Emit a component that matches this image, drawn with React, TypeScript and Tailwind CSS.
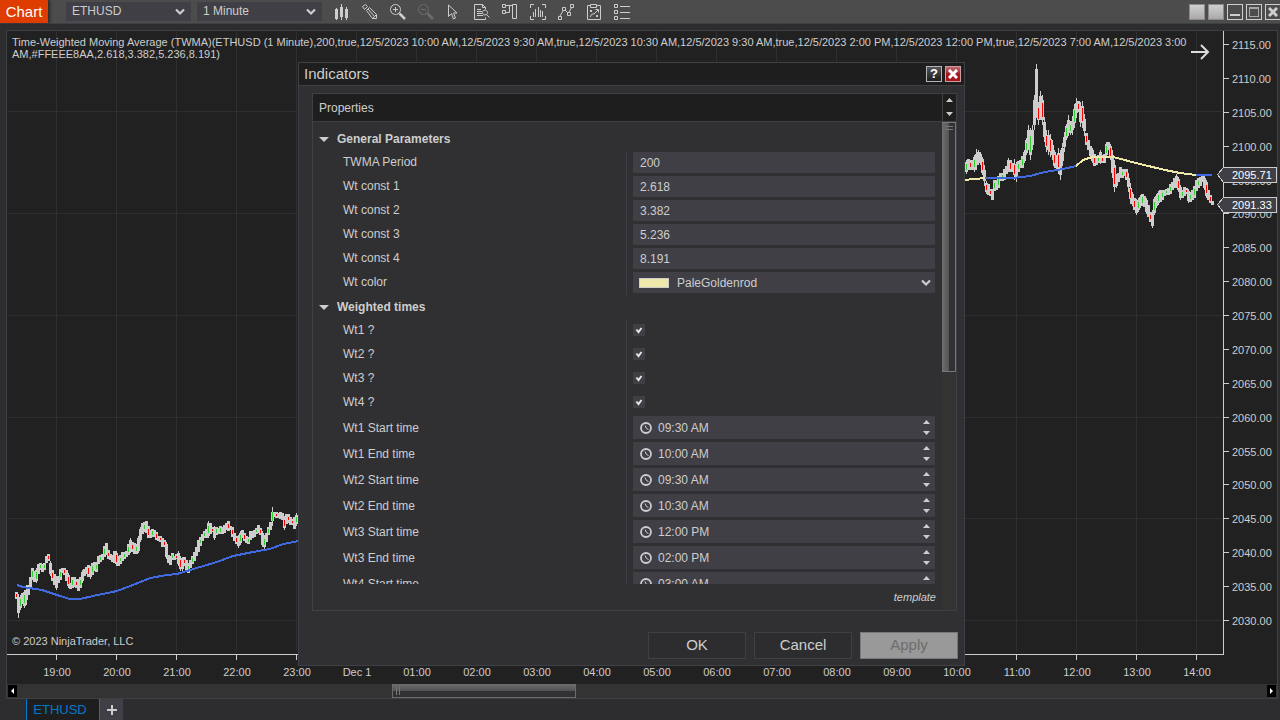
import { useState } from "react";

type Range = [number, number];

// high / low of every bar, in canvas pixels, one bar each 2px
const eveningBars: Range[] = [
  [592, 599], [594, 618], [595, 610], [593, 604], [590, 608], [585, 605], [585, 595], [577, 588],
  [568, 580], [571, 582], [568, 583], [564, 574], [563, 570], [564, 572], [563, 570], [556, 563],
  [554, 561], [561, 576], [570, 581], [574, 585], [576, 590], [576, 583], [569, 580], [568, 573],
  [568, 575], [570, 581], [573, 588], [583, 589], [577, 588], [577, 587], [579, 588], [579, 591],
  [577, 588], [570, 583], [569, 576], [567, 574], [565, 577], [566, 579], [563, 575], [562, 571],
  [562, 572], [556, 564], [555, 562], [554, 560], [546, 557], [543, 555], [550, 559], [554, 560],
  [555, 562], [551, 563], [551, 566], [556, 566], [555, 564], [552, 561], [552, 559], [551, 557],
  [544, 555], [538, 553], [542, 552], [543, 554], [544, 554], [536, 553], [527, 542], [523, 534],
  [522, 532], [521, 533], [526, 538], [530, 538], [529, 537], [530, 537], [532, 540], [536, 541],
  [536, 542], [538, 547], [540, 547], [542, 559], [555, 563], [556, 565], [553, 560], [556, 560],
  [554, 559], [551, 566], [556, 571], [557, 571], [557, 566], [560, 572], [563, 573], [560, 568],
  [556, 564], [552, 561], [547, 556], [540, 552], [537, 546], [534, 541], [531, 538], [529, 538],
  [521, 538], [523, 534], [527, 532], [526, 540], [527, 535], [528, 534], [526, 534], [527, 534],
  [525, 533], [523, 530], [521, 531], [526, 530], [527, 537], [533, 541], [536, 544], [535, 548],
  [531, 545], [530, 538], [533, 541], [536, 543], [537, 544], [531, 540], [531, 538], [530, 537],
  [528, 534], [525, 533], [528, 535], [531, 547], [535, 549], [533, 542], [527, 535], [522, 530],
  [507, 526], [512, 517], [512, 518], [513, 518], [512, 519], [513, 520], [516, 530], [514, 524],
  [514, 523], [517, 525], [519, 525], [517, 529], [513, 526],
];

const dayBars: Range[] = [
  [160, 174], [159, 170], [160, 170], [160, 170], [155, 172], [149, 170], [150, 165], [152, 165],
  [157, 175], [165, 186], [181, 194], [184, 195], [189, 196], [189, 200], [180, 191], [180, 190],
  [176, 188], [173, 181], [173, 181], [169, 180], [166, 174], [158, 172], [160, 172], [163, 172],
  [159, 180], [162, 182], [161, 172], [160, 168], [156, 168], [150, 163], [138, 155], [125, 150],
  [128, 160], [125, 150], [95, 130], [64, 118], [102, 125], [91, 120], [95, 125], [117, 142],
  [130, 152], [130, 155], [134, 157], [140, 160], [150, 168], [155, 170], [148, 174], [150, 180],
  [143, 166], [132, 152], [124, 140], [115, 136], [121, 135], [116, 135], [104, 128], [98, 118],
  [101, 112], [102, 127], [101, 128], [114, 136], [133, 145], [140, 150], [146, 156], [148, 163],
  [154, 166], [157, 165], [155, 163], [150, 164], [155, 163], [154, 163], [142, 157], [142, 150],
  [144, 160], [150, 178], [160, 192], [174, 188], [173, 182], [167, 178], [169, 178], [169, 176],
  [169, 180], [173, 192], [183, 204], [192, 206], [198, 210], [199, 215], [198, 212], [195, 208],
  [194, 206], [196, 207], [198, 214], [205, 217], [212, 222], [210, 228], [197, 215], [194, 208],
  [191, 205], [190, 202], [190, 200], [190, 196], [189, 195], [188, 195], [184, 194], [182, 190],
  [178, 188], [174, 188], [177, 192], [185, 200], [190, 198], [187, 196], [188, 194], [189, 203],
  [192, 202], [190, 200], [186, 198], [180, 191], [178, 188], [177, 186], [176, 182], [176, 190],
  [180, 198], [190, 200], [195, 203], [201, 205],
];

const hours = [
  "19:00", "20:00", "21:00", "22:00", "23:00", "Dec 1", "01:00", "02:00", "03:00", "04:00",
  "05:00", "06:00", "07:00", "08:00", "09:00", "10:00", "11:00", "12:00", "13:00", "14:00",
];

const prices = Array.from({ length: 18 }, (_, i) => 2115 - i * 5);
const priceY = (price: number) => Math.round(44 + ((2115 - price) * 576) / 85);

const Bars = ({ data, from }: { data: Range[]; from: number }) => (
  <g>
    {data.map(([high, low], i) => {
      const x = from + i * 2;
      const trim = low - high > 18 ? 5 : low - high > 12 ? 2 : 0;
      return (
        <g key={x} fill="#cdcdcd">
          <rect x={x} y={high} width={1} height={low - high} />
          <rect x={x - 1} y={high + trim} width={3} height={low - high - trim * 2} />
        </g>
      );
    })}
    {data.map(([high, low], i) => {
      if (i % 2 === 1 || i % 7 === 6) return null;
      const prev = data[Math.max(i - 1, 0)];
      const next = data[Math.min(i + 1, data.length - 1)];
      const falling = next[0] + next[1] > prev[0] + prev[1];
      const trim = Math.ceil((low - high) / 4);
      return (
        <rect
          key={i}
          x={from + i * 2}
          y={high + trim}
          width={1}
          height={Math.max(low - high - trim * 2, 2)}
          fill={falling ? "#ff0000" : "#32cd32"}
        />
      );
    })}
  </g>
);

const PriceTag = ({ y, value }: { y: number; value: string }) => (
  <g>
    <path
      d={`M1217 ${y} L1223 ${y - 7} H1276 V${y + 8} H1223 Z`}
      fill="#403f46"
      stroke="#cdcdcd"
      transform="translate(.5 .5)"
    />
    <text x={1232} y={y + 5} fill="#ffffff">
      {value}
    </text>
  </g>
);

const Chart = () => (
  <svg
    viewBox="7 31 1270 653"
    className="block h-full w-full bg-[#212121] font-['Liberation_Sans',Arial,sans-serif] text-[11px]"
    shapeRendering="crispEdges"
  >
    {hours.map((hour, i) => (
      <rect key={hour} x={56 + i * 60} y={31} width={1} height={620} fill="#2f2f31" />
    ))}
    {[111, 213, 315, 417, 518, 620].map((y) => (
      <rect key={y} x={8} y={y} width={1214} height={1} fill="#2f2f31" />
    ))}
    <rect x={7} y={654} width={1217} height={1} fill="#cdcdcd" />
    <rect x={1223} y={31} width={1} height={624} fill="#cdcdcd" />
    {hours.map((hour, i) => (
      <g key={hour} fill="#cdcdcd">
        <rect x={56 + i * 60} y={655} width={1} height={5} />
        <text x={57 + i * 60} y={676} textAnchor="middle">
          {hour}
        </text>
      </g>
    ))}
    {prices.map((price) => (
      <g key={price} fill="#cdcdcd">
        <rect x={1224} y={priceY(price)} width={5} height={1} />
        <text x={1232} y={priceY(price) + 5}>
          {price}.00
        </text>
      </g>
    ))}

    <Bars data={eveningBars} from={16} />
    <Bars data={dayBars} from={966} />

    <g fill="none" strokeWidth={2}>
      <path
        stroke="#4169e1"
        d="M17 585 L23 587 42 590 60 596 70 599 80 599 93 596 117 591 133 585 150 578 167 575 177 574 200 567 217 562 233 556 253 552 270 549 283 544 299 541"
      />
      <path stroke="#eee8aa" d="M964 180 L985 178" />
      <path stroke="#4169e1" d="M985 178 L1013 178 1030 176 1045 172 1063 169 1076 166" />
      <path
        stroke="#eee8aa"
        d="M1076 166 L1083 160 1092 157 1113 157 1140 164 1165 170 1180 173 1196 175"
      />
      <path stroke="#4169e1" d="M1196 175 H1212" />
    </g>

    <PriceTag y={174} value="2095.71" />
    <PriceTag y={204} value="2091.33" />
    <path
      d="M1191 52 H1208 M1201 45 L1208 52 L1201 59"
      fill="none"
      stroke="#dcdcdc"
      strokeWidth={2}
      shapeRendering="auto"
    />
  </svg>
);

const toolIcons = [
  { label: "Chart style", d: "M1 5h3v10H1zM2 4h1v12H2zM6 3h3v10H6zM7 0h1v16H7zM11 5h3v9h-3zM12 3h1v13h-1z", solid: true },
  { label: "Drawing tools", d: "M.5 2.500l3-2 2 2-3 3zM4.500 6.500l3-3 7 7v4h-4zM6 5l7 8M10.500 14.500l4-4" },
  { label: "Zoom in", d: "M5.500.5a5 5 0 1 0 .01 0zM5.500 3v5M3 5.500h5", handle: true },
  { label: "Zoom out", d: "M5.500.5a5 5 0 1 0 .01 0zM3 5.500h5", handle: true, off: true },
  { label: "Cursor", d: "M2.500 1v11.500l3-3 2 5.500 2-1-2-5h3.500z" },
  { label: "Data box", d: "M11.500 5V3.500l-3-3h-8v15h11v-2M8.500.5v3h3M3 5.500h4M3 7.500h5M3 9.500h5M3 11.500h6M11 6a2.500 2.500 0 1 0 .01 0zM12.500 10.500l3 3" },
  { label: "Chart trader", d: "M.5.5h3v3h-3zM.5 6.500h3v3h-3zM3.500 1.500h7M3.500 8.500h4v-7M10.500.5h4v14h-4z" },
  { label: "Data series", d: "M.5 4V.5H4M12 .5h3.500V4M.5 12v3.500H4M12 15.500h3.500V12M3.500 8v5M5.500 5v8M8.500 3v10M10.500 6v7M12.500 7v6" },
  { label: "Indicators", d: "M.5 12.500h3v3h-3zM4.500 3.500h3v3h-3zM9.500 8.500h3v3h-3zM12.500 .5h3v3h-3zM2 12l3-5M7 6l3 3M11 8l3-5" },
  { label: "Strategies", d: "M4 1.500H1.500v14h13v-14H11M4.500.5h6v3h-6zM4 6l2 2M6 6L4 8M9.500 5.500h3v3M12 6l-4 4-2 0-2 3M10 11l2 2M12 11l-2 2" },
  { label: "Properties", d: "M.5.5h3v3h-3zM.5 6.500h3v3h-3zM.5 12.500h3v3h-3zM6 2.500h10M6 8.500h10M6 14.500h10" },
];

const Caret = () => (
  <svg viewBox="0 0 10 8" className="pointer-events-none h-2 w-2.5 shrink-0">
    <path d="M1 1.500 L5 5.500 L9 1.500" fill="none" stroke="#cdcdcd" strokeWidth={2.2} />
  </svg>
);

const Triangle = ({ down = false }: { down?: boolean }) => (
  <svg viewBox="0 0 7 4" className="block h-1 w-[7px]">
    <path d={down ? "M0 0h7L3.500 4z" : "M3.500 0L7 4H0z"} fill="#cdcdcd" />
  </svg>
);

const CloseMark = ({ color }: { color: string }) => (
  <svg viewBox="0 0 10 10" className="h-[10px] w-[10px]">
    <path d="M1 1l8 8M9 1L1 9" stroke={color} strokeWidth={3} />
  </svg>
);

const ToolbarSelect = ({ label, options }: { label: string; options: string[] }) => (
  <div className="flex h-[19px] w-[125px] items-center bg-[#403f46] pr-[6px]">
    <select
      aria-label={label}
      className="h-full min-w-0 flex-1 appearance-none bg-transparent pl-[6px] text-[12px] leading-[19px] text-[#cdcdcd] outline-none"
    >
      {options.map((option) => (
        <option key={option}>{option}</option>
      ))}
    </select>
    <Caret />
  </div>
);

const Toolbar = () => (
  <header className="flex h-6 shrink-0 items-start border-b border-[#3f3f46] bg-[#4c4c4c]">
    <h1 className="h-[23px] w-12 bg-[#de3c00] text-center text-[15px] leading-[23px] text-white shadow-[2px_0_3px_#2a2a2a]">
      Chart
    </h1>
    <div className="ml-[18px] flex gap-[6px] pt-[2px]">
      <ToolbarSelect label="Instrument" options={["ETHUSD"]} />
      <ToolbarSelect label="Interval" options={["1 Minute"]} />
    </div>
    <div className="ml-3 flex gap-3 pt-1">
      {toolIcons.map(({ label, d, solid, handle, off }) => (
        <button key={label} aria-label={label} disabled={off} className="h-4 w-4 disabled:opacity-25">
          <svg viewBox="0 0 16 16" className="block h-4 w-4 overflow-visible">
            <path d={d} fill={solid ? "#cdcdcd" : "none"} stroke={solid ? "none" : "#cdcdcd"} />
            {handle && <path d="M9.500 9.500L15 15" stroke="#cdcdcd" strokeWidth={2.5} />}
          </svg>
        </button>
      ))}
    </div>
    <div className="-mr-px ml-auto flex gap-[3px] pt-1">
      <button
        aria-label="Link instrument"
        className="h-4 w-4 border border-[#8a8a8a] bg-linear-to-b from-[#cfcfcf] to-[#aca8a9]"
      />
      <button
        aria-label="Link interval"
        className="h-4 w-4 border border-[#8a8a8a] bg-linear-to-b from-[#cfcfcf] to-[#aca8a9]"
      />
      <button aria-label="Minimize" className="flex h-4 w-4 items-end justify-center border border-[#cdcdcd] pb-[3px]">
        <span className="h-[2px] w-[10px] bg-[#cdcdcd]" />
      </button>
      <button aria-label="Maximize" className="flex h-4 w-4 items-center justify-center border border-[#cdcdcd]">
        <span className="h-[10px] w-[10px] border border-t-2 border-[#a8a8a8]" />
      </button>
      <button aria-label="Close" className="flex h-4 w-4 items-center justify-center border border-[#cdcdcd]">
        <CloseMark color="#cdcdcd" />
      </button>
    </div>
  </header>
);

type RowProps = {
  id: string;
  label: string;
  tall?: boolean;
  children: React.ReactNode;
};

const Row = ({ id, label, tall = false, children }: RowProps) => (
  <div className={`flex shrink-0 ${tall ? "h-[26px]" : "h-6"}`}>
    <label htmlFor={id} className={`flex w-[313px] shrink-0 items-center pl-[30px] ${tall ? "" : "pb-[2px]"}`}>
      {label}
    </label>
    <div
      className={`flex min-w-0 flex-1 items-center border-l border-[#3f3f46] pl-[6px] pr-[7px] ${tall ? "pb-[1px]" : "pb-[1px]"}`}
    >
      {children}
    </div>
  </div>
);

const SectionTitle = ({ children }: { children: React.ReactNode }) => (
  <h3 className="shrink-0 font-bold">
    <button className="flex h-6 w-full items-center gap-[8px] pl-[6px]">
      <svg viewBox="0 0 10 5" className="h-[5px] w-[10px]">
        <path d="M0 0h10L5 5z" fill="#cdcdcd" />
      </svg>
      {children}
    </button>
  </h3>
);

const numbers = [
  ["TWMA Period", "200"],
  ["Wt const 1", "2.618"],
  ["Wt const 2", "3.382"],
  ["Wt const 3", "5.236"],
  ["Wt const 4", "8.191"],
];

const times = [
  ["Wt1 Start time", "09:30 AM"],
  ["Wt1 End time", "10:00 AM"],
  ["Wt2 Start time", "09:30 AM"],
  ["Wt2 End time", "10:30 AM"],
  ["Wt3 Start time", "12:00 PM"],
  ["Wt3 End time", "02:00 PM"],
  ["Wt4 Start time", "03:00 AM"],
];

const Properties = () => {
  const [enabled, setEnabled] = useState([true, true, true, true]);

  return (
    <div className="flex min-w-0 flex-1 flex-col overflow-hidden pt-[5px]">
      <SectionTitle>General Parameters</SectionTitle>
      {numbers.map(([label, value]) => (
        <Row key={label} id={label} label={label}>
          <input
            id={label}
            defaultValue={value}
            className="h-[21px] w-full bg-[#403f46] px-[7px] outline-none"
          />
        </Row>
      ))}
      <Row id="color" label="Wt color">
        <div className="flex h-[21px] w-full items-center bg-[#403f46] pl-[6px] pr-[4px]">
          <span className="h-[10px] w-[30px] border border-[#cdcdcd] bg-[#eee8aa]" />
          <select id="color" className="h-full min-w-0 flex-1 appearance-none pl-[8px] outline-none">
            <option>PaleGoldenrod</option>
          </select>
          <Caret />
        </div>
      </Row>
      <SectionTitle>Weighted times</SectionTitle>
      {enabled.map((checked, i) => (
        <Row key={i} id={`wt${i}`} label={`Wt${i + 1} ?`}>
          <span className="grid h-[14px] w-3 pb-[2px]">
            <input
              id={`wt${i}`}
              type="checkbox"
              checked={checked}
              onChange={() => setEnabled(enabled.map((on, n) => (n === i ? !on : on)))}
              className="col-start-1 row-start-1 h-3 w-3 appearance-none bg-[#403f46]"
            />
            {checked && (
              <svg viewBox="0 0 12 12" className="pointer-events-none col-start-1 row-start-1 h-3 w-3">
                <path d="M3.500 5.500 L5.500 8 L8.500 4" fill="none" stroke="#e6e6e6" strokeWidth={2} />
              </svg>
            )}
          </span>
        </Row>
      ))}
      {times.map(([label, value]) => (
        <Row key={label} id={label} label={label} tall>
          <div className="flex h-[23px] w-full items-center bg-[#403f46] pl-[7px] pr-[5px]">
            <svg viewBox="0 0 12 12" className="h-3 w-3 shrink-0">
              <circle cx={6} cy={6} r={5} fill="none" stroke="#cdcdcd" strokeWidth={1.8} />
              <path d="M5 3.500 L6.500 6.500 L8.500 7.500" fill="none" stroke="#cdcdcd" />
            </svg>
            <input id={label} defaultValue={value} className="h-full min-w-0 flex-1 pl-[6px] outline-none" />
            <span className="flex flex-col gap-[7px]">
              <button aria-label={`${label} up`}>
                <Triangle />
              </button>
              <button aria-label={`${label} down`}>
                <Triangle down />
              </button>
            </span>
          </div>
        </Row>
      ))}
    </div>
  );
};

const dialogButton =
  "h-[27px] w-[98px] border border-[#3f3f46] bg-[#2d2d30] text-[15px] disabled:border-[#787878] disabled:bg-[#999999] disabled:text-[#6d6d6d]";

const IndicatorsDialog = () => (
  <section
    role="dialog"
    aria-label="Indicators"
    className="absolute left-[298px] top-[62px] flex h-[604px] w-[667px] flex-col border border-[#3f3f46] bg-[#303032] text-[12px] text-[#cdcdcd]"
  >
    <div className="flex h-[23px] shrink-0 items-center gap-[3px] border-b border-[#3f3f46] bg-[#1e1e1e] pl-[5px] pr-[3px]">
      <h2 className="flex-1 text-[15px]">Indicators</h2>
      <button
        aria-label="Help"
        className="h-4 w-4 border border-[#b4b4b4] bg-linear-to-b from-[#55555a] to-[#1e1e1e] text-[13px] leading-[14px] font-bold text-white"
      >
        ?
      </button>
      <button
        aria-label="Close dialog"
        className="flex h-4 w-4 items-center justify-center border border-[#c8a0a0] bg-linear-to-b from-[#b86a70] to-[#a8151c] to-50%"
      >
        <CloseMark color="#ffffff" />
      </button>
    </div>

    <div className="mt-[7px] mr-[7px] ml-[13px] flex min-h-0 flex-1 flex-col border border-[#3f3f46]">
      <div className="flex h-7 shrink-0 border-b border-[#3f3f46] bg-[#1e1e1e]">
        <h3 className="flex flex-1 items-center pl-[6px]">Properties</h3>
        <div className="flex w-[14px] flex-col items-center justify-between border-l border-[#3f3f46] pt-[4px] pb-[5px]">
          <button aria-label="Scroll up">
            <Triangle />
          </button>
          <button aria-label="Scroll down">
            <Triangle down />
          </button>
        </div>
      </div>
      <div className="flex min-h-0 flex-1">
        <div className="flex min-w-0 flex-1 flex-col">
          <div className="flex min-h-0 flex-1">
            <Properties />
          </div>
          <div className="flex h-[26px] shrink-0 items-center justify-end pr-[6px]">
            <button className="text-[11px] italic">template</button>
          </div>
        </div>
        <div className="w-[14px] bg-[#333333]">
          <div className="flex h-[250px] flex-col items-center gap-[2px] border border-l-0 border-[#77777a] bg-[linear-gradient(to_right,#6e6e6e,#555555_50%,#323234_54%)] pt-[3px]">
            <span className="h-px w-2 bg-[#77777a]" />
            <span className="h-px w-2 bg-[#77777a]" />
          </div>
        </div>
      </div>
    </div>

    <div className="flex shrink-0 justify-end gap-2 pt-[21px] pr-[6px] pb-[6px]">
      <button className={dialogButton}>OK</button>
      <button className={dialogButton}>Cancel</button>
      <button className={dialogButton} disabled>
        Apply
      </button>
    </div>
  </section>
);

const App = () => (
  <div className="relative flex h-screen flex-col overflow-hidden bg-[#2d2d30] font-['Liberation_Sans',Arial,sans-serif] text-[#cdcdcd]">
    <Toolbar />
    <main className="mt-[6px] mr-[2px] ml-[6px] flex min-h-0 flex-1 flex-col border border-[#3f3f46]">
      <div className="relative min-h-0 flex-1">
        <Chart />
        <p className="absolute top-[5px] left-[5px] max-w-[1185px] text-[11px] leading-[12px]">
          Time-Weighted Moving Average (TWMA)(ETHUSD (1 Minute),200,true,12/5/2023 10:00 AM,12/5/2023 9:30 AM,true,12/5/2023
          10:30 AM,12/5/2023 9:30 AM,true,12/5/2023 2:00 PM,12/5/2023 12:00 PM,true,12/5/2023 7:00 AM,12/5/2023 3:00
          AM,#FFEEE8AA,2.618,3.382,5.236,8.191)
        </p>
        <p className="absolute bottom-[37px] left-[5px] text-[11px] leading-[12px]">© 2023 NinjaTrader, LLC</p>
      </div>
      <div className="flex h-[14px] shrink-0 items-center bg-[#333333] px-px">
        <button aria-label="Scroll left" className="flex h-3 w-[9px] items-center justify-center bg-black">
          <svg viewBox="0 0 3 6" className="h-[6px] w-[3px]">
            <path d="M3 0v6L0 3z" fill="#ffffff" />
          </svg>
        </button>
        <div className="flex h-full flex-1">
          <div className="w-[30%]" />
          <div className="flex h-[14px] w-[184px] items-center gap-[2px] border border-[#6a6a6c] bg-[linear-gradient(to_bottom,#6a6a6a,#505050_50%,#323234_54%)] pl-[3px]">
            <span className="h-2 w-px bg-[#77777a]" />
            <span className="h-2 w-px bg-[#77777a]" />
          </div>
        </div>
        <button aria-label="Scroll right" className="flex h-3 w-[9px] items-center justify-center bg-black">
          <svg viewBox="0 0 3 6" className="h-[6px] w-[3px]">
            <path d="M0 0v6l3-3z" fill="#ffffff" />
          </svg>
        </button>
      </div>
    </main>
    <nav className="flex h-[21px] shrink-0 pl-[26px]">
      <button className="w-[74px] border-x border-[#007acc] bg-[#1e1e1e] pr-[6px] text-[13px] text-[#007acc]">ETHUSD</button>
      <button aria-label="Add tab" className="flex w-[23px] items-center justify-center bg-[#403f46]">
        <svg viewBox="0 0 10 10" className="h-[10px] w-[10px]">
          <path d="M5 0v10M0 5h10" stroke="#cdcdcd" strokeWidth={2} />
        </svg>
      </button>
    </nav>
    <IndicatorsDialog />
  </div>
);

export default App;
